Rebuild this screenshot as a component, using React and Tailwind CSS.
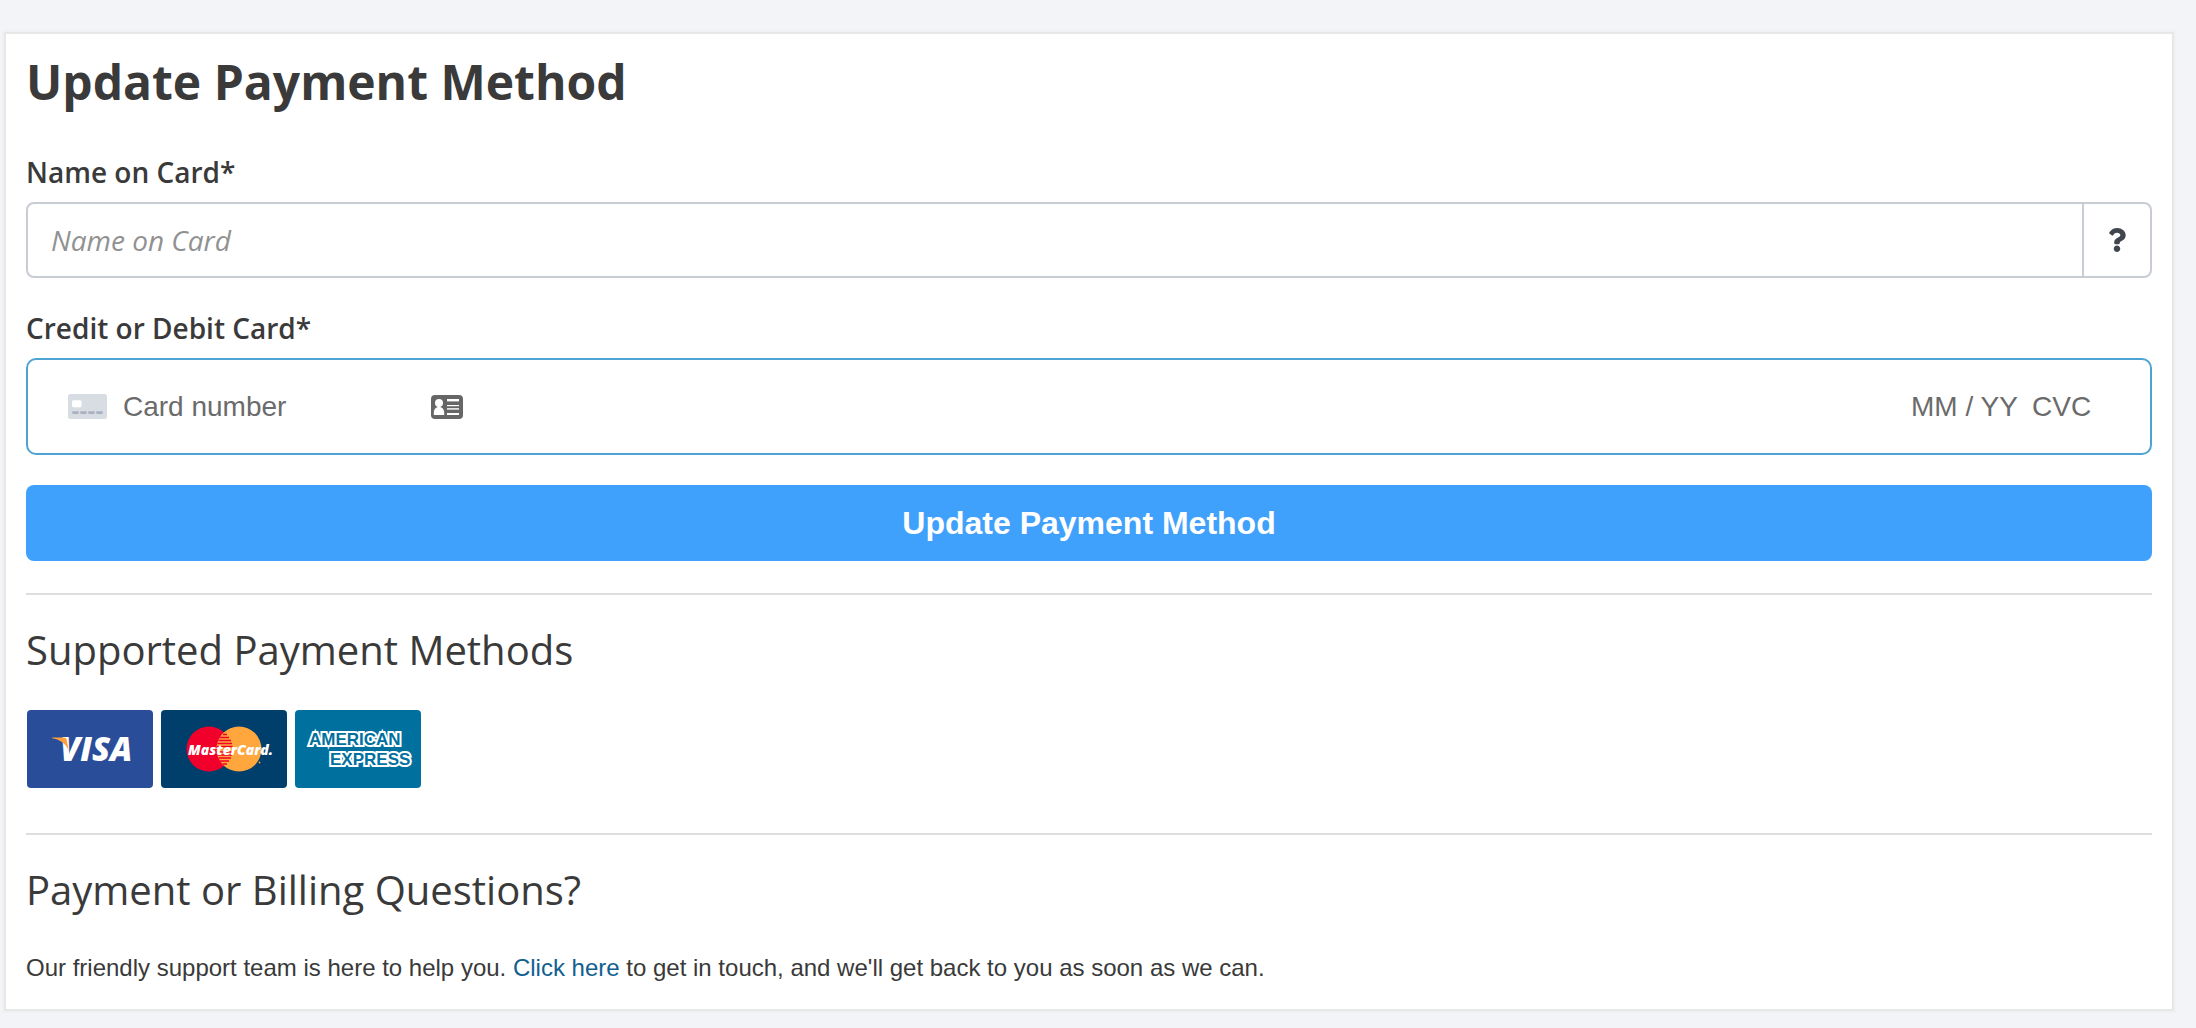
import { useState } from 'react'
import { FaQuestion } from 'react-icons/fa'

const heading = "font-['Open_Sans',sans-serif] text-[40px] leading-[56px] text-[#3a3a3a]"
const label = "block font-['Open_Sans',sans-serif] text-[28px] leading-[40px] font-semibold text-[#3a3a3a]"
const cardInput = "min-w-0 bg-transparent text-[28px] leading-[40px] text-[#3a3a3a] outline-none placeholder:text-[#6b6b6b]"

function BlankCardIcon() {
  return (
    <svg width="39" height="25" viewBox="0 0 39 25" className="shrink-0" aria-hidden="true">
      <rect width="39" height="25" rx="2.5" fill="#d8dce3" />
      <rect x="4" y="6.3" width="9.5" height="7" rx="1.5" fill="#fff" />
      <g fill="#aab2c2">
        <rect x="4" y="17.3" width="7" height="2.6" rx="1.3" />
        <rect x="12" y="17.3" width="7" height="2.6" rx="1.3" />
        <rect x="20" y="17.3" width="7" height="2.6" rx="1.3" />
        <rect x="28" y="17.3" width="7" height="2.6" rx="1.3" />
      </g>
    </svg>
  )
}

function ContactIcon() {
  return (
    <svg width="32" height="24" viewBox="0 0 32 24" aria-hidden="true">
      <rect width="32" height="24" rx="4" fill="#666" />
      <g fill="#fff">
        <circle cx="8" cy="8" r="4" />
        <path d="M6.8 10h2.4v2C11.8 12.8 13.2 15 13.2 17.6V20H2.8v-2.4C2.8 15 4.2 12.8 6.8 12z" />
        <rect x="16" y="4" width="12" height="2.4" />
        <rect x="16" y="10" width="12" height="1.2" />
        <rect x="16" y="13.2" width="12" height="1.4" />
        <rect x="16" y="18" width="12" height="2" />
      </g>
    </svg>
  )
}

function VisaLogo() {
  return (
    <svg width="126" height="78" viewBox="0 0 126 78" role="img" aria-label="Visa">
      <rect width="126" height="78" rx="4" fill="#2a4d9a" />
      <text x="33" y="51" fill="#fff" fontFamily="Open Sans, sans-serif" fontSize="33" fontWeight="800" fontStyle="italic">VISA</text>
      <path d="M25 27.5h11.5c2 0 2.8.7 3.2 2.3l2 10.6C38.4 33 32.5 29.3 25 28.2z" fill="#ff9f3e" />
    </svg>
  )
}

function MasterCardLogo() {
  return (
    <svg width="126" height="78" viewBox="0 0 126 78" role="img" aria-label="MasterCard">
      <rect width="126" height="78" rx="4" fill="#003e6c" />
      <circle cx="48" cy="39" r="22.5" fill="#f0002a" />
      <circle cx="78" cy="39" r="22.5" fill="#ffa63d" />
      <path d="M62 24.5h4M59 27.5h9M57.5 30.5h12.5M56.5 33.5h14.5M56 36.5h15.5M56 42h15.5M56.5 45h14.5M57.5 48h12.5M59 51h9M61.5 54h4.5" stroke="#f0002a" strokeWidth="1.4" />
      <text x="27" y="45" fill="#fff" fontFamily="Open Sans, sans-serif" fontSize="14" fontWeight="800" fontStyle="italic">MasterCard.</text>
      <circle cx="98.5" cy="52.5" r="0.9" fill="#ffa63d" />
    </svg>
  )
}

function AmexLogo() {
  return (
    <svg width="126" height="78" viewBox="0 0 126 78" role="img" aria-label="American Express">
      <rect width="126" height="78" rx="4" fill="#00709e" />
      <g fill="#00709e" stroke="#fff" strokeWidth="4" paintOrder="stroke" fontFamily="Liberation Sans, sans-serif" fontSize="17" fontWeight="700">
        <text x="14" y="35">AMERICAN</text>
        <text x="35" y="55">EXPRESS</text>
      </g>
    </svg>
  )
}

export default function App() {
  const [name, setName] = useState('')

  return (
    <main className="min-h-screen bg-[#f3f4f7] pt-8 pr-[22px] pb-4 pl-1 font-['Liberation_Sans',Arial,sans-serif]">
      <div className="border-2 border-[#e7e7e7] bg-white px-5 pt-[18px] pb-[23px] shadow-[0_0_0_2px_#f0f1f2]">
        <h1 className="font-['Open_Sans',sans-serif] text-5xl leading-[60px] font-bold text-[#3a3a3a]">
          Update Payment Method
        </h1>

        <form onSubmit={e => e.preventDefault()}>
          <label htmlFor="card-name" className={`${label} mt-10`}>Name on Card*</label>
          <div className="mt-[10px] flex h-[76px] overflow-hidden rounded-lg border-2 border-[#c7cdd3]">
            <input
              id="card-name"
              type="text"
              placeholder="Name on Card"
              value={name}
              onChange={e => setName(e.target.value)}
              className="min-w-0 flex-1 px-[23px] font-['Open_Sans',sans-serif] text-[28px] text-[#3a3a3a] outline-none placeholder:text-[#919191] placeholder:italic"
            />
            <button type="button" aria-label="Help" className="flex w-[68px] items-center justify-center border-l-2 border-[#c7cdd3] text-[#40464d]">
              <FaQuestion size={24} />
            </button>
          </div>

          <label htmlFor="card-number" className={`${label} mt-[30px]`}>Credit or Debit Card*</label>
          <div className="mt-[10px] flex h-[97px] items-center rounded-[10px] border-2 border-[#4da3d2] px-10">
            <BlankCardIcon />
            <input id="card-number" type="text" placeholder="Card number" className={`${cardInput} ml-4 w-[308px]`} />
            <button type="button" aria-label="Autofill card">
              <ContactIcon />
            </button>
            <input type="text" aria-label="Expiry date" placeholder="MM / YY" className={`${cardInput} ml-auto w-[121px]`} />
            <input type="text" aria-label="CVC" placeholder="CVC" className={`${cardInput} mr-[18px] w-[60px]`} />
          </div>

          <button type="submit" className="mt-[30px] h-[76px] w-full rounded-lg bg-[#3fa1fb] text-[32px] font-bold text-white">
            Update Payment Method
          </button>
        </form>

        <hr className="mt-8 border-t-2 border-[#dedede]" />
        <h2 className={`${heading} mt-[27px]`}>Supported Payment Methods</h2>
        <div className="mt-8 flex gap-2 pl-px">
          <VisaLogo />
          <MasterCardLogo />
          <AmexLogo />
        </div>

        <hr className="mt-[45px] border-t-2 border-[#dedede]" />
        <h2 className={`${heading} mt-[27px]`}>Payment or Billing Questions?</h2>
        <p className="mt-8 text-2xl leading-9 text-[#3a3a3a]">
          Our friendly support team is here to help you.{' '}
          <a href="#support" className="text-[#11608f]">Click here</a>{' '}
          to get in touch, and we'll get back to you as soon as we can.
        </p>
      </div>
    </main>
  )
}
